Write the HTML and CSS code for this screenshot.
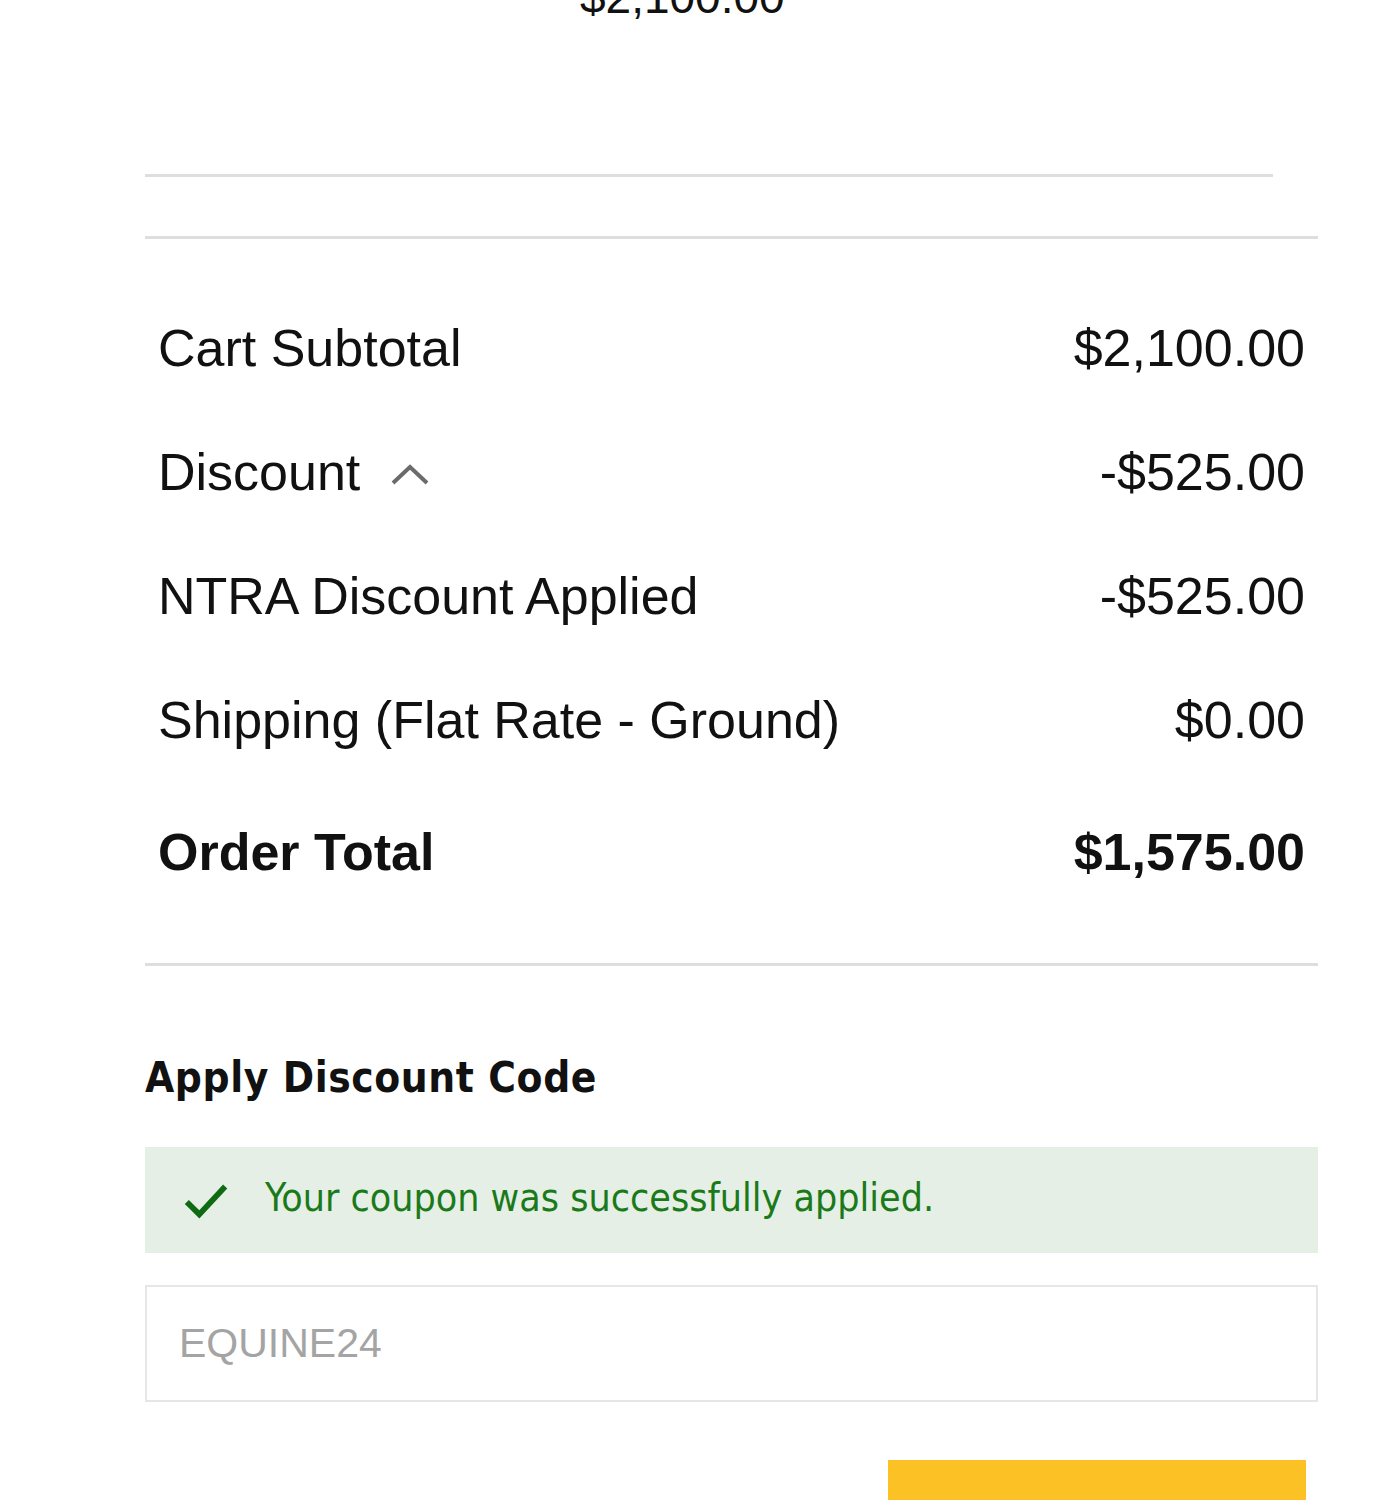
FILE: index.html
```html
<!DOCTYPE html>
<html lang="en">
<head>
<meta charset="utf-8">
<title>Order Summary</title>
<link rel="stylesheet" href="styles.css">
</head>
<body>
<div class="page">
  <div class="item-price">$2,100.00</div>
  <div class="item-rule"></div>
  <div class="summary">
    <div class="row"><span class="label">Cart Subtotal</span><span class="amount">$2,100.00</span></div>
    <div class="row"><span class="label">Discount
      <svg class="chev" viewBox="0 0 40 24" width="40" height="24"><path d="M3 21 L20 5 L37 21" fill="none" stroke="#6b6b6b" stroke-width="4"/></svg></span><span class="amount">-$525.00</span></div>
    <div class="row"><span class="label">NTRA Discount Applied</span><span class="amount">-$525.00</span></div>
    <div class="row"><span class="label">Shipping (Flat Rate - Ground)</span><span class="amount">$0.00</span></div>
    <div class="row total"><span class="label">Order Total</span><span class="amount">$1,575.00</span></div>
  </div>
  <div class="discount">
    <h2 class="discount-title">Apply Discount Code</h2>
    <div class="alert">
      <svg class="check" viewBox="0 0 48 40" width="46" height="40"><path d="M4 22 L17 35 L44 6" fill="none" stroke="#0f6b12" stroke-width="6"/></svg>
      <span class="alert-text">Your coupon was successfully applied.</span>
    </div>
    <input class="code-input" type="text" placeholder="EQUINE24">
    <div class="actions"><button class="apply-btn" type="button"></button></div>
  </div>
</div>
</body>
</html>
```
FILE: styles.css
```css
html, body { margin: 0; padding: 0; background: #ffffff; }
body { font-family: "Liberation Sans", Arial, sans-serif; color: #111; overflow: hidden; }
.page { width: 1173px; margin-left: 145px; }
.item-price { margin-top: -26px; margin-left: 435px; width: 202px; text-align: center; font-size: 46px; line-height: 46px; color: #111; }
.item-rule { margin-top: 154px; width: 1128px; height: 3px; background: #dedede; }
.summary { margin-top: 59px; border-top: 3px solid #dedede; padding: 47px 13px 46px 13px; border-bottom: 3px solid #dedede; }
.row { display: flex; justify-content: space-between; align-items: center; height: 124px; font-size: 52px; color: #111; }
.row .label { display: flex; align-items: center; gap: 30px; }
.chev { margin-top: 4px; }
.row.total { height: 130px; font-weight: 700; margin-top: 5px; }
.discount-title { margin: 86px 0 0 0; font-size: 42px; line-height: 52px; font-weight: 700; font-stretch: condensed; font-family: "Liberation Sans Narrow", "DejaVu Sans Condensed", "Liberation Sans", sans-serif; letter-spacing: 0.6px; color: #111; }
.alert { margin-top: 43px; height: 106px; background: #e6efe6; display: flex; align-items: center; padding-left: 38px; gap: 36px; color: #1a7a1a; font-size: 39px; font-family: "Liberation Sans Narrow", "DejaVu Sans Condensed", "Liberation Sans", sans-serif; font-stretch: condensed; }
.alert-text { margin-top: -6px; }
.check { flex: none; }
.code-input { display: block; box-sizing: border-box; margin-top: 32px; width: 1173px; height: 117px; border: 2px solid #e6e6e6; padding: 0 32px; font-size: 41px; font-family: "Liberation Sans Narrow", "Liberation Sans", sans-serif; color: #333; background: #fff; outline: none; }
.code-input::placeholder { color: #a4a4a4; }
.actions { display: flex; justify-content: flex-end; padding-right: 12px; margin-top: 58px; }
.apply-btn { width: 418px; height: 120px; border: 0; background: #fcc125; }
```
